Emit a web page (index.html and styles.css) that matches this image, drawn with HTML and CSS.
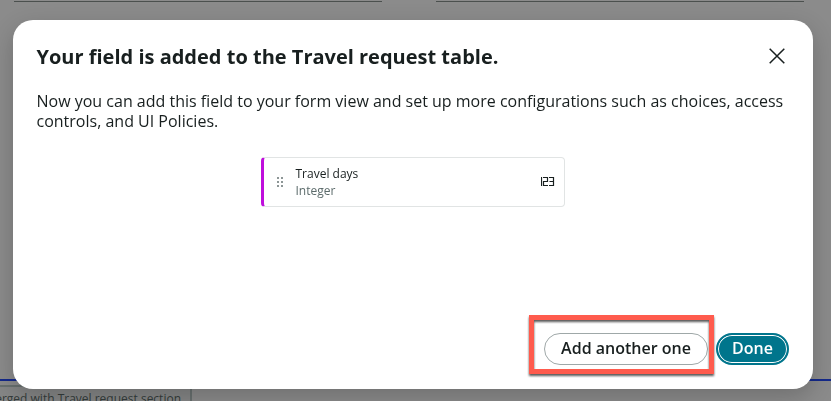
FILE: index.html
```html
<!DOCTYPE html>
<html lang="en">
<head>
<meta charset="utf-8">
<title>Travel request</title>
<link rel="stylesheet" href="styles.css">
</head>
<body>
<div class="page">
  <div class="fields"><span class="field-line"></span><span class="field-line"></span></div>
  <div class="lower">
    <div class="section-note">Merged with Travel request section</div>
  </div>
</div>
<section class="modal" role="dialog" aria-labelledby="title">
  <header class="modal-header">
    <h1 id="title">Your field is added to the Travel request table.</h1>
    <button class="close" aria-label="Close">
      <svg width="16" height="16" viewBox="0 0 16 16"><path d="M.7.7l14.600 14.600M15.300.7L.7 15.300"/></svg>
    </button>
  </header>
  <p class="message">Now you can add this field to your form view and set up more configurations such as choices, access controls, and UI Policies.</p>
  <div class="card">
    <svg class="grip" width="7" height="10" viewBox="0 0 7 10"><path d="M0 0h2v2H0zM4 0h2v2H4zM0 4h2v2H0zM4 4h2v2H4zM0 8h2v2H0zM4 8h2v2H4z"/></svg>
    <div class="card-text"><div class="name">Travel days</div><div class="type">Integer</div></div>
    <svg class="number" width="14" height="10" viewBox="0 0 14 10"><path d="M.5 0v9M2 .5h4.500v4h-4v4h4.500M8 .5h4.500v8h-4.500M8.500 4.500h4"/></svg>
  </div>
  <footer class="actions">
    <div class="callout"><button class="btn secondary">Add another one</button></div>
    <button class="btn primary">Done</button>
  </footer>
</section>
</body>
</html>
```
FILE: styles.css
```css
*, *::after { box-sizing: border-box; }
body {
  margin: 0;
  height: 401px;
  overflow: hidden;
  background: #8b8b8b;
  color: #181f1f;
  font-family: "Open Sans", "Noto Sans", sans-serif;
}
.page {
  height: 401px;
  display: flex;
  flex-direction: column;
  justify-content: space-between;
}
.fields {
  display: grid;
  grid-template-columns: 368px 368px;
  gap: 54px;
  padding: 1px 0 0 14px;
}
.field-line { height: 1px; background: #4b504e; }
.lower {
  height: 22px;
  border-top: 2px solid #14298a;
  padding-top: 4px;
}
.section-note {
  width: 193px;
  height: 30px;
  margin-left: -1px;
  padding: 4px 9px 0 0;
  border: 2px solid #68706f;
  border-left: 0;
  background: #858686;
  color: #343c3b;
  font-size: 12px;
  line-height: 16px;
  display: flex;
  justify-content: flex-end;
  white-space: nowrap;
}
.modal {
  position: fixed;
  left: 13px;
  top: 20px;
  width: 800px;
  height: 369px;
  border-radius: 20px;
  padding: 24px 24px 24px 23.5px;
  background: #fff;
  box-shadow: 0 8px 24px rgba(0, 0, 0, .2);
  display: flex;
  flex-direction: column;
}
.modal-header {
  display: flex;
  justify-content: space-between;
  height: 47px;
}
h1 {
  margin: 0;
  font-size: 20px;
  line-height: 26px;
  font-weight: 700;
  white-space: nowrap;
}
.close {
  width: 16px;
  height: 16px;
  margin: 4px 4px 0 0;
  padding: 0;
  border: 0;
  background: none;
}
.close svg { display: block; }
.close path { fill: none; stroke: #181f1f; stroke-width: 1.5; }
.message {
  margin: 0;
  font-size: 16px;
  line-height: 20px;
}
.card {
  width: 304px;
  height: 50px;
  margin: 26px 0 0 224.5px;
  padding: 0 9px 0 13px;
  border: 1px solid #e1e4e4;
  border-left: 3px solid #bf0fdc;
  border-radius: 4px;
  display: flex;
  align-items: center;
}
.grip { fill: #8d9696; }
.card-text { margin-left: 11.5px; font-size: 12px; line-height: 17px; }
.type { color: #5c6b6b; }
.number { margin-left: auto; fill: none; stroke: #181f1f; stroke-width: 1.2; }
.actions {
  display: flex;
  justify-content: flex-end;
  gap: 8px;
  margin-top: auto;
}
.callout { position: relative; }
.callout::after {
  content: "";
  position: absolute;
  left: -15px;
  top: -18px;
  width: 185px;
  height: 59px;
  border: 5px solid #ff5b4d;
  filter: drop-shadow(0 2px 1px rgba(0, 0, 0, .65));
  pointer-events: none;
}
.btn {
  display: block;
  height: 32px;
  padding: 0 0 2px;
  border-radius: 16px;
  font: 600 16px/26px "Open Sans", "Noto Sans", sans-serif;
  white-space: nowrap;
}
.secondary {
  width: 164px;
  border: 1px solid #9fa8a8;
  background: #fff;
  color: #181f1f;
}
.primary {
  width: 73px;
  border: 2px solid #00758c;
  background: #00758c;
  color: #fff;
  font-weight: 650;
  box-shadow: inset 0 0 0 1px #fff;
}
```
